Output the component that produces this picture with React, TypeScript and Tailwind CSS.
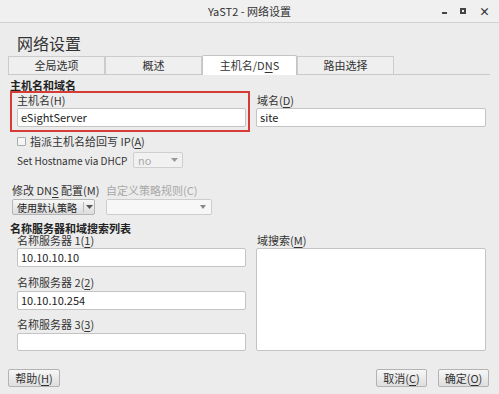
import React from "react";

const font = { fontFamily: '"Noto Sans CJK SC", "Noto Sans", sans-serif' };

function U({ children }: { children: React.ReactNode }) {
  return <span className="underline underline-offset-2">{children}</span>;
}

function Caret() {
  return (
    <svg width="7" height="4" viewBox="0 0 7 4" className="shrink-0">
      <path d="M0 0h7L3.5 4z" fill="#555" />
    </svg>
  );
}

function Field({ value, w = "w-[229px]", h = "h-[19px]" }: { value?: string; w?: string; h?: string }) {
  return (
    <div
      className={`${w} ${h} bg-white border border-[#c4c4c4] rounded-[2px] flex items-center pl-[3px] text-[11px] text-[#222] whitespace-nowrap`}
    >
      {value}
    </div>
  );
}

export default function App() {
  const tabs = ["全局选项", "概述", "主机名/DNS", "路由选择"];

  return (
    <div
      style={font}
      className="w-[499px] h-[394px] bg-[#ececec] flex flex-col text-[11px] text-[#333] overflow-hidden whitespace-nowrap"
    >
      {/* TITLE BAR */}
      <div className="h-[23px] shrink-0 grid grid-cols-[1fr_auto_1fr] items-center border-b border-[#d2d2d2] bg-[#f0f0f0]">
        <div />
        <div className="text-[11px] text-[#333]">YaST2 - 网络设置</div>
        <div className="flex justify-end items-center gap-[13px] pr-[9px] text-[#333]">
          <span className="w-[5px] h-[2px] bg-[#444] mt-[4px]" />
          <span className="w-[6px] h-[6px] border-2 border-[#444]" />
          <span className="text-[11px] font-bold leading-none">×</span>
        </div>
      </div>

      {/* HEADING */}
      <div className="pl-[17px] pt-[10px] h-[32px] text-[16px] leading-[20px] text-[#333]">
        网络设置
      </div>

      {/* TABS */}
      <div className="ml-[8px] w-[482px] h-[20px] flex items-end border-b border-[#c9c9c9]">
        {tabs.map((t, i) =>
          i === 2 ? (
            <div
              key={t}
              className="w-[95px] h-[20px] -mb-px bg-white border border-b-0 border-[#c4c4c4] rounded-t-[2px] flex items-center justify-center text-[#333]"
            >
              主机名/D<U>N</U>S
            </div>
          ) : (
            <div
              key={t}
              className="w-[97px] h-[18px] border border-b-0 border-[#cccccc] bg-[#efefef] flex items-center justify-center text-[#333]"
            >
              {t}
            </div>
          )
        )}
      </div>

      {/* HOSTNAME + DOMAIN */}
      <div className="pl-[10px] pt-[4px] font-bold text-[#222] leading-[13px]">主机名和域名</div>
      <div className="ml-[10px] -mt-[1px] grid grid-cols-[240px_230px] gap-x-[6px]">
        <div className="h-[41px] border-2 border-[#d63b36] pl-[5px] pr-[2px] flex flex-col">
          <div className="h-[15px] leading-[15px]">主机名(H)</div>
          <Field value="eSightServer" />
        </div>
        <div className="pt-[2px] flex flex-col">
          <div className="h-[15px] leading-[15px] pl-[1px]">
            域名(<U>D</U>)
          </div>
          <Field value="site" w="w-[230px]" />
        </div>
      </div>

      <div className="ml-[17px] mt-[3px] flex items-center gap-[4px] h-[13px]">
        <span className="w-[9px] h-[9px] border border-[#aaa] bg-[#f6f6f6] rounded-[1px]" />
        <span>
          指派主机名给回写 IP(<U>A</U>)
        </span>
      </div>

      <div className="ml-[17px] mt-[4px] flex items-center h-[16px]">
        <span className="w-[116px] text-[10px]">Set Hostname via DHCP</span>
        <div className="w-[50px] h-[16px] border border-[#cfcfcf] bg-[#f1f1f1] rounded-[2px] flex items-center justify-between px-[4px] text-[#aaa]">
          no
          <svg width="7" height="4" viewBox="0 0 7 4">
            <path d="M0 0h7L3.5 4z" fill="#999" />
          </svg>
        </div>
      </div>

      {/* DNS CONFIG */}
      <div className="ml-[12px] mt-[15px] flex">
        <div className="w-[94px] flex flex-col">
          <span className="h-[15px] leading-[15px]">
            修改 DN<U>S</U> 配置(M)
          </span>
          <div className="mt-[1px] w-[83px] h-[16px] border border-[#b5b5b5] rounded-[2px] bg-gradient-to-b from-[#f7f7f7] to-[#dcdcdc] flex items-center text-[#222]">
            <span className="pl-[4px] w-[70px] text-[10px]">使用默认策略</span>
            <span className="w-px h-[10px] bg-[#b9b9b9]" />
            <span className="flex-1 flex justify-center">
              <Caret />
            </span>
          </div>
        </div>
        <div className="flex flex-col">
          <span className="h-[15px] leading-[15px] text-[#a8a8a8]">自定义策略规则(C)</span>
          <div className="mt-[1px] w-[106px] h-[16px] border border-[#cdcdcd] rounded-[2px] bg-[#f7f7f7] flex items-center justify-end pr-[5px]">
            <svg width="6" height="4" viewBox="0 0 6 4">
              <path d="M0 0h6L3 4z" fill="#888" />
            </svg>
          </div>
        </div>
      </div>

      {/* NAME SERVERS */}
      <div className="pl-[10px] mt-[7px] font-bold text-[#222] leading-[12px]">名称服务器和域搜索列表</div>
      <div className="ml-[17px] grid grid-cols-[229px_230px] gap-x-[10px]">
        <div className="flex flex-col">
          <span className="h-[13px] leading-[13px]">
            名称服务器 1(<U>1</U>)
          </span>
          <div className="mt-[1px]">
            <Field value="10.10.10.10" h="h-[19px]" />
          </div>
          <span className="mt-[8px] h-[15px] leading-[15px]">
            名称服务器 2(<U>2</U>)
          </span>
          <div className="mt-[1px]">
            <Field value="10.10.10.254" h="h-[19px]" />
          </div>
          <span className="mt-[7px] h-[15px] leading-[15px]">
            名称服务器 3(<U>3</U>)
          </span>
          <div className="mt-[1px]">
            <Field h="h-[18px]" />
          </div>
        </div>
        <div className="flex flex-col">
          <span className="h-[13px] leading-[13px] pl-[1px]">
            域搜索(<U>M</U>)
          </span>
          <div className="mt-[1px] w-[230px] h-[103px] bg-white border border-[#c4c4c4] rounded-[2px]" />
        </div>
      </div>

      {/* BUTTONS */}
      <div className="mt-[18px] pl-[8px] pr-[10px] flex items-center">
        <button className="w-[52px] h-[18px] border border-[#b3b3b3] rounded-[2px] bg-gradient-to-b from-[#f7f7f7] to-[#dedede] text-[11px] text-[#333]">
          帮助(<U>H</U>)
        </button>
        <div className="flex-1" />
        <button className="w-[51px] h-[18px] border border-[#b3b3b3] rounded-[2px] bg-gradient-to-b from-[#f7f7f7] to-[#dedede] text-[11px] text-[#333]">
          取消(<U>C</U>)
        </button>
        <button className="ml-[11px] w-[51px] h-[18px] border border-[#b3b3b3] rounded-[2px] bg-gradient-to-b from-[#f7f7f7] to-[#dedede] text-[11px] text-[#333]">
          确定(<U>O</U>)
        </button>
      </div>
    </div>
  );
}
